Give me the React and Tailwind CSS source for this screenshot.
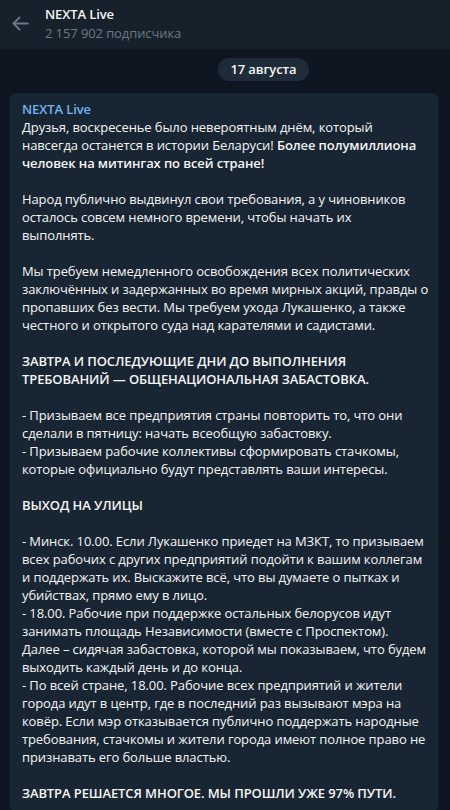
import React from 'react';

const B = ({ children }) => <span className="font-semibold">{children}</span>;

const lines = [
  'Друзья, воскресенье было невероятным днём, который',
  <>навсегда останется в истории Беларуси! <B>Более полумиллиона</B></>,
  <B>человек на митингах по всей стране!</B>,
  '',
  'Народ публично выдвинул свои требования, а у чиновников',
  'осталось совсем немного времени, чтобы начать их',
  'выполнять.',
  '',
  'Мы требуем немедленного освобождения всех политических',
  'заключённых и задержанных во время мирных акций, правды о',
  'пропавших без вести. Мы требуем ухода Лукашенко, а также',
  'честного и открытого суда над карателями и садистами.',
  '',
  <B>ЗАВТРА И ПОСЛЕДУЮЩИЕ ДНИ ДО ВЫПОЛНЕНИЯ</B>,
  <B>ТРЕБОВАНИЙ — ОБЩЕНАЦИОНАЛЬНАЯ ЗАБАСТОВКА.</B>,
  '',
  '- Призываем все предприятия страны повторить то, что они',
  'сделали в пятницу: начать всеобщую забастовку.',
  '- Призываем рабочие коллективы сформировать стачкомы,',
  'которые официально будут представлять ваши интересы.',
  '',
  <B>ВЫХОД НА УЛИЦЫ</B>,
  '',
  '- Минск. 10.00. Если Лукашенко приедет на МЗКТ, то призываем',
  'всех рабочих с других предприятий подойти к вашим коллегам',
  'и поддержать их. Выскажите всё, что вы думаете о пытках и',
  'убийствах, прямо ему в лицо.',
  '- 18.00. Рабочие при поддержке остальных белорусов идут',
  'занимать площадь Независимости (вместе с Проспектом).',
  'Далее – сидячая забастовка, которой мы показываем, что будем',
  'выходить каждый день и до конца.',
  '- По всей стране, 18.00. Рабочие всех предприятий и жители',
  'города идут в центр, где в последний раз вызывают мэра на',
  'ковёр. Если мэр отказывается публично поддержать народные',
  'требования, стачкомы и жители города имеют полное право не',
  'признавать его больше властью.',
  '',
  <B>ЗАВТРА РЕШАЕТСЯ МНОГОЕ. МЫ ПРОШЛИ УЖЕ 97% ПУТИ.</B>,
];

export default function App() {
  return (
    <div
      className="w-full h-[810px] overflow-hidden bg-[#0e1621] text-[#f5f5f5] tracking-[-0.1px]"
      style={{ fontFamily: "'Open Sans', 'Noto Sans', sans-serif" }}
    >
      <header className="h-[50px] bg-[#17212b] border-b border-[#101921] flex items-start">
        <div className="w-[45px] h-[46px] flex items-center pl-[12px]">
          <svg width="17" height="15" viewBox="0 0 17 15" fill="none" stroke="#6c7883" strokeWidth="1.8" strokeLinecap="round" strokeLinejoin="round">
            <path d="M16 7.5H1.5" />
            <path d="M7.5 1.5L1.5 7.5L7.5 13.5" />
          </svg>
        </div>
        <div className="pt-[5px] flex flex-col gap-[1px]">
          <div className="text-[13px] leading-[18px] font-semibold text-[#f5f5f5]">NEXTA Live</div>
          <div className="text-[13px] leading-[18px] text-[#6d7883]">2 157 902 подписчика</div>
        </div>
      </header>

      <div className="mt-[8px] ml-[218px] w-[91px] h-[23px] rounded-full bg-[#1e2c3a] flex items-center justify-center text-[13px] font-semibold text-[#f5f5f5]">
        17 августа
      </div>

      <div className="mt-[12px] ml-[10px] w-[428px] rounded-[6px] bg-[#182533] pt-[7px] pb-[10px] px-[12px] overflow-hidden">
        <div className="text-[13px] leading-[18px] font-semibold text-[#71b4ef]">NEXTA Live</div>
        <div className="text-[13px] leading-[18px]">
          {lines.map((l, i) => (
            <div key={i} className="whitespace-nowrap h-[18px]">{l}</div>
          ))}
        </div>
      </div>
    </div>
  );
}
